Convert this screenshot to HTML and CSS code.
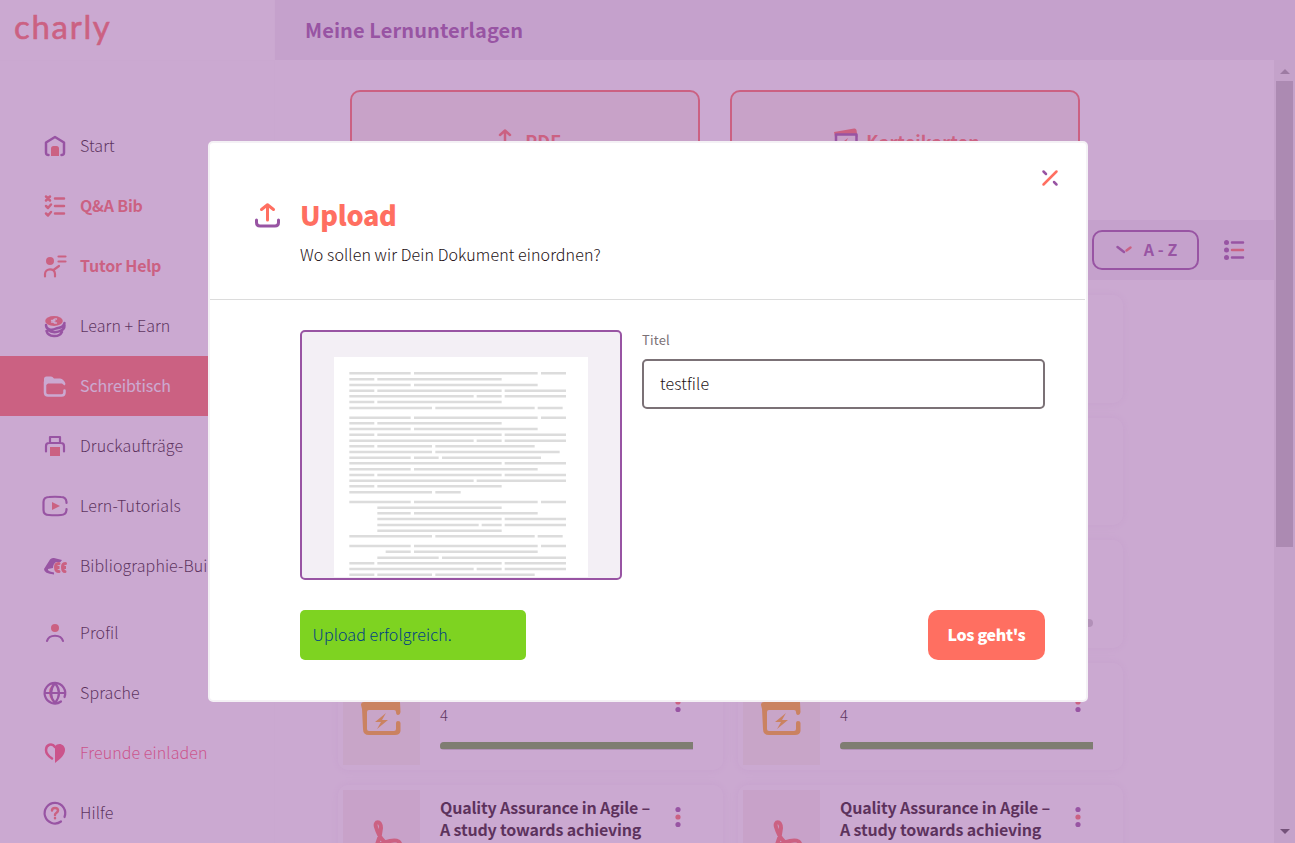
FILE: index.html
```html
<!DOCTYPE html>
<html lang="de">
<head>
<meta charset="utf-8">
<title>charly – Meine Lernunterlagen</title>
<link rel="stylesheet" href="styles.css">
</head>
<body>
<div class="app">
  <aside class="sidebar">
    <div class="brand"><span class="logo">charly</span></div>
    <nav class="nav">
      <a class="item"><svg class="ico" viewBox="0 0 30 30"><path class="p" d="M8.500 24C6.500 24 6 23.500 6 21.500V11.500L15 6L24 11.500V21.500C24 23.500 23.500 24 21.500 24"/><path class="cf" d="M11 25V17.500Q11 15 13.500 15H16.500Q19 15 19 17.500V25Z"/></svg>Start</a>
      <a class="item strong"><svg class="ico" viewBox="0 0 30 30"><path class="c" d="M15 7.500H24M15 15H24M15 22.500H24M6 5.500L10 9.500M10 5.500L6 9.500M6 15L8 17L11 13.500M6 22.500L8 24.500L11 21"/></svg>Q&amp;A Bib</a>
      <a class="item strong"><svg class="ico" viewBox="0 0 30 30"><circle class="cf" cx="10" cy="10" r="4"/><path class="c thin" d="M5 25.500V23C5 17 15 16.500 15 23V25.500M13.500 19L19 15M18.500 5.500H25.500M18.500 10.500H25.500"/></svg>Tutor Help</a>
      <a class="item"><svg class="ico" viewBox="0 0 30 30"><path class="p" d="M6 14C6 19 12 19.500 16 17.500C20 17 24 15.500 24.500 12M6.500 20C8 26 19 27 22 21M24.500 14C25 21 13 23 8 19"/><ellipse class="cf" cx="14" cy="10" rx="8.800" ry="5"/><path class="w" d="M16.500 8C12.500 7 12 13 16.500 12M11.500 9.300H15M11.500 11H15"/></svg>Learn + Earn</a>
      <a class="item active"><svg class="ico" viewBox="0 0 30 30"><path class="wf" d="M4 8Q4 5.500 6.500 5.500H11Q12.500 5.500 14 7.500H20Q24 8 25.500 13L24.500 14.500L22 12.500H8L6 14V21H4Z"/><path class="w2" d="M5 11V21.500Q5 24.500 8 24.500H21.500Q24.500 24.500 24.500 21.500V19.500"/></svg>Schreibtisch</a>
      <a class="item"><svg class="ico" viewBox="0 0 30 30"><path class="p thin" d="M10 11V6H20V11M6 20.500V15Q6 12 9 12H21Q24 12 24 15V20.500"/><path class="cf" d="M10 16H20V25H10Z"/></svg>Druckaufträge</a>
      <a class="item"><svg class="ico" viewBox="0 0 30 30"><path class="p thin" d="M26.500 12V11Q26 6 21 6Q15 5.500 9 6Q3.500 6 3.500 11V19Q3.500 24 9 24Q15 24.500 21 24Q26 24 26.500 19V18"/><path class="cf" d="M12 11L20 15L12 19Z"/></svg>Lern-Tutorials</a>
      <a class="item"><svg class="ico" viewBox="0 0 30 30"><path class="pf" d="M4 18L10 8.500Q11.500 6.500 14 7L22 9L20.500 11L16 11Q13 13 13 17L8 18Q7 20 14 21.500V23.500Q4 22.500 4 18Z"/><path class="c3" d="M19 12.500Q15.500 12.500 15.500 16Q15.500 20.500 19 20.500M25.500 12.500Q22.500 12.500 22.500 16Q22.500 20.500 25 20.500"/><path class="cf" d="M15 15H19.500V18H15ZM22 15H26V18H22Z"/></svg>Bibliographie-Builder</a>
    </nav>
    <nav class="nav lower">
      <a class="item"><svg class="ico" viewBox="0 0 30 30"><circle class="cf" cx="15" cy="10" r="4"/><path class="p thin" d="M7 23C9 16 21 16 23 23"/></svg>Profil</a>
      <a class="item"><svg class="ico" viewBox="0 0 30 30"><path class="cf" d="M12 7Q6 14 12 23L15 25Q8 15 15 5Z"/><path class="p thin" d="M24.500 19A10.300 10.300 0 1 0 21 23.500M5 15H25M15 5Q7 15 15 25M15 5Q23 15 15 25"/></svg>Sprache</a>
      <a class="item pink"><svg class="ico" viewBox="0 0 30 30"><path class="kf" d="M15 25V8.500C18 4 25 6 25 12C25 17 20 21 15 25Z"/><path class="k" d="M15 9C12 4.500 6 6.500 6 12C6 16 9 18.500 12 20.500"/></svg>Freunde einladen</a>
      <a class="item"><svg class="ico" viewBox="0 0 30 30"><path class="p thin" d="M24.500 19A10.300 10.300 0 1 0 21 23.500"/><path class="c" d="M12 12.500C12 9 18 9 18 12.500C18 15 15 14.500 15 17M15 20V20.200"/></svg>Hilfe</a>
    </nav>
  </aside>
  <div class="page">
    <header class="topbar"><h1>Meine Lernunterlagen</h1></header>
    <div class="body">
      <main class="content">
        <div class="tiles">
          <div class="tile"><svg class="tico" viewBox="0 0 24 24"><path class="c" d="M12 18V3M7 7L12 2.500L17 7M1 17V22H23V17"/></svg>PDF</div>
          <div class="tile"><svg class="tico" viewBox="0 0 24 24"><path class="cf" d="M0 4L20 0.500Q22 0 22.500 2L23.500 9H1Z"/><path class="pbox" d="M2 6.500H22.500V22H2Z"/><path class="cf" d="M14 10L8 14.500H12L10 19L16 14H12Z"/></svg>Karteikarten</div>
        </div>
        <div class="filter">
          <button class="sort"><svg viewBox="0 0 16 8"><path class="p" d="M1.500 1L8 6"/><path class="c" d="M10.500 4.500L14.500 1.500"/></svg>A - Z</button>
          <svg class="listico" viewBox="0 0 22 22"><path class="p" d="M9 3.500H20M9 18.500H20"/><path class="c" d="M9 11H20"/><circle class="pf" cx="3.500" cy="3.500" r="2.500"/><circle class="pf" cx="3.500" cy="11" r="2.500"/><circle class="pf" cx="3.500" cy="18.500" r="2.500"/></svg>
        </div>
        <div class="cards">
          <div class="card"></div><div class="card"></div>
          <div class="card"></div><div class="card"></div>
          <div class="card"></div><div class="card"><div class="thumb"></div><div class="info"><div class="track"></div></div></div>
          <div class="card short"><div class="thumb yellow"><svg class="big" viewBox="0 0 40 40"><path class="of" d="M1 10L0 6Q0 3 3 3L36 0Q39 0 39 3L39.500 13Q39 16 37 16Q35 16 35 13Q35 11 33 11H8Q6 11 6 13V30Q6 32 8 32H33Q35 32 35 30V24Q35 22 37 22Q39.500 22 39.500 24V32Q39 36 34 36H8Q2 36 2 30Z"/><path class="of" d="M25 14L14 23H20L16 30L27 21H21Z"/></svg></div><div class="info"><span class="count">4</span><div class="track full"><div class="fill"></div></div></div><svg class="dots" viewBox="0 0 6 22"><circle class="pf" cx="3" cy="3.500" r="2.600"/><circle class="cf" cx="3" cy="11" r="2.600"/><circle class="pf" cx="3" cy="18.500" r="2.600"/></svg></div>
          <div class="card short"><div class="thumb yellow"><svg class="big" viewBox="0 0 40 40"><path class="of" d="M1 10L0 6Q0 3 3 3L36 0Q39 0 39 3L39.500 13Q39 16 37 16Q35 16 35 13Q35 11 33 11H8Q6 11 6 13V30Q6 32 8 32H33Q35 32 35 30V24Q35 22 37 22Q39.500 22 39.500 24V32Q39 36 34 36H8Q2 36 2 30Z"/><path class="of" d="M25 14L14 23H20L16 30L27 21H21Z"/></svg></div><div class="info"><span class="count">4</span><div class="track full"><div class="fill"></div></div></div><svg class="dots" viewBox="0 0 6 22"><circle class="pf" cx="3" cy="3.500" r="2.600"/><circle class="cf" cx="3" cy="11" r="2.600"/><circle class="pf" cx="3" cy="18.500" r="2.600"/></svg></div>
          <div class="card"><div class="thumb"><svg class="big" viewBox="0 0 40 40"><path class="pdf" d="M7 38C14 30 18 20 19 9C19 1 12 2 14 8C16 15 20 25 31 27C42 28 39 19 28 22C20 24 10 27 4 33"/></svg></div><div class="info"><h3>Quality Assurance in Agile – A study towards achieving</h3></div><svg class="dots" viewBox="0 0 6 22"><circle class="pf" cx="3" cy="3.500" r="2.600"/><circle class="cf" cx="3" cy="11" r="2.600"/><circle class="pf" cx="3" cy="18.500" r="2.600"/></svg></div>
          <div class="card"><div class="thumb"><svg class="big" viewBox="0 0 40 40"><path class="pdf" d="M7 38C14 30 18 20 19 9C19 1 12 2 14 8C16 15 20 25 31 27C42 28 39 19 28 22C20 24 10 27 4 33"/></svg></div><div class="info"><h3>Quality Assurance in Agile – A study towards achieving</h3></div><svg class="dots" viewBox="0 0 6 22"><circle class="pf" cx="3" cy="3.500" r="2.600"/><circle class="cf" cx="3" cy="11" r="2.600"/><circle class="pf" cx="3" cy="18.500" r="2.600"/></svg></div>
        </div>
      </main>
      <div class="scroll"><i class="up"></i><div class="grip"></div><i class="down"></i></div>
    </div>
  </div>
</div>

<div class="overlay">
  <section class="modal">
    <div class="head">
      <svg class="close" viewBox="0 0 16 16"><path class="c" d="M1.500 14.500L14.500 1.500"/><path class="p" d="M1.500 1.500L4 4M12 12L14.500 14.500"/></svg>
      <div class="title"><svg class="upico" viewBox="0 0 25 25"><path class="c3" d="M12.500 17V2M6.500 6.500L12.500 1.800L18.500 6.500"/><path class="p3" d="M1.500 17V19.500Q1.500 23 5 23H20Q23.500 23 23.500 19.500V17"/></svg><h2>Upload</h2></div>
      <p>Wo sollen wir Dein Dokument einordnen?</p>
    </div>
    <div class="form">
      <div class="preview">
        <svg class="paper" viewBox="132 111 762 660"><path class="ln" d="M178 160H362M372 160H743M753 160H828
M178 178H253M262 178H635
M178 195H362M372 195H743
M178 212H253M262 212H635M644 212H828
M178 229H551M560 229H635M644 229H828
M178 246H253M262 246H635
M178 264H426M436 264H734M743 264H818
M178 293H362M372 293H743M753 293H828
M178 310H253M262 310H635
M178 327H362M372 327H743
M178 344H253M262 344H635M644 344H828
M178 362H551M560 362H635M644 362H828
M178 379H253M262 379H426M436 379H734
M178 396H426M436 396H809
M178 413H362M372 413H446M456 413H753
M178 430H635M644 430H828
M178 448H362M372 448H743
M178 465H253M262 465H635M644 465H828
M178 482H551M560 482H828
M178 499H253M262 499H635
M178 517H426M436 517H512
M178 546H362M372 546H743M753 546H828
M262 563H635
M262 580H362M372 580H743
M262 597H635M644 597H828
M262 615H566M575 615H635M644 615H828
M262 632H635
M178 649H426M436 649H734M743 649H818
M178 678H362M372 678H743M753 678H828
M287 695H362M372 695H743
M262 713H446M456 713H828
M178 730H253M262 730H635M644 730H828
M178 747H551M560 747H635M644 747H828
M178 764H253M262 764H426M436 764H734"/></svg>
      </div>
      <div class="field"><label>Titel</label><input type="text" value="testfile"></div>
    </div>
    <div class="foot"><div class="success">Upload erfolgreich.</div><button class="go">Los geht's</button></div>
  </section>
</div>
</body>
</html>
```
FILE: styles.css
```css
:root { --coral: #ff6f61; --purple: #9854a3; --ink: #231014; --soft: #f3eff5; }
* { box-sizing: border-box; }
html, body { margin: 0; height: 100%; overflow: hidden; }
body { font-family: "Noto Sans CJK SC", "Open Sans", sans-serif; font-weight: 300; font-size: 16px; line-height: 22px; letter-spacing: 0.1px; color: var(--ink); background: #fff; }
h1, h2, h3, p { margin: 0; }
svg { display: block; flex: none; overflow: visible; }
svg path { fill: none; stroke-width: 2.500; stroke-linecap: round; stroke-linejoin: round; }
svg .p { stroke: var(--purple); }
svg .c { stroke: var(--coral); }
svg .c3 { stroke: var(--coral); stroke-width: 3; }
svg .p3 { stroke: var(--purple); stroke-width: 3; }
svg .thin { stroke-width: 2.200; }
svg .pf { fill: var(--purple); }
svg .cf { fill: var(--coral); }
svg .of { fill: #fdb01f; }
svg .w { stroke: #fff; stroke-width: 1.3; }
svg .w2 { stroke: #fff; }
svg .wf { fill: #fff; }
svg .k { stroke: #ff5573; }
svg .kf { fill: #ff5573; }
svg .pbox { fill: #f9f1ee; stroke: var(--purple); }

.app { display: flex; height: 843px; }
.sidebar { width: 275px; flex: none; border-right: 1px solid #fdfcfd; }
.brand { height: 61px; border-bottom: 1px solid #fdfcfd; padding: 6px 0 0 14px; }
.logo { display: inline-block; font-family: Lato, sans-serif; font-weight: 400; font-size: 33px; line-height: 40px; letter-spacing: 1.7px; color: var(--coral); -webkit-text-stroke: 0.6px var(--coral); }
.nav { padding-top: 55px; }
.nav.lower { padding-top: 7px; }
.item { display: flex; align-items: center; height: 60px; padding: 0 0 2px 40px; gap: 10px; white-space: nowrap; }
.item.strong { color: var(--coral); font-weight: 700; letter-spacing: -0.2px; }
.item.active { color: #fff; background: var(--coral); font-weight: 400; letter-spacing: -0.1px; }
.item.pink { color: #ff5573; }
.ico { width: 30px; height: 30px; margin-top: 2px; }

.page { flex: 1; display: flex; flex-direction: column; min-width: 0; }
.topbar { height: 60px; flex: none; background: var(--soft); display: flex; align-items: center; padding-left: 30px; }
.topbar h1 { font-size: 20px; line-height: 28px; font-weight: 700; letter-spacing: 0.1px; color: var(--purple); }
.body { display: flex; flex: 1; min-height: 0; }
.content { flex: 1; overflow: hidden; padding-top: 30px; }
.tiles { display: flex; gap: 30px; padding-left: 75px; margin-bottom: 30px; }
.tile { width: 350px; height: 100px; border: 2px solid var(--coral); border-radius: 10px; background: #f9f1ec; display: flex; align-items: center; justify-content: center; gap: 8px; padding: 2px 0 0 4px; font-size: 18px; font-weight: 700; color: var(--coral); }
.tico { width: 24px; height: 24px; margin-top: -2px; }
.filter { height: 60px; background: var(--soft); display: flex; align-items: center; justify-content: flex-end; gap: 24px; padding-right: 29px; }
.sort { font: inherit; font-weight: 700; letter-spacing: 0.1px; color: var(--purple); background: none; border: 2px solid var(--purple); border-radius: 10px; width: 107px; height: 40px; padding: 0 0 2px 2px; display: flex; align-items: center; justify-content: center; gap: 12px; }
.sort svg { width: 16px; height: 8px; margin-top: 2px; }
.listico { width: 22px; height: 22px; }
.cards { display: grid; grid-template-columns: 385px 385px; grid-auto-rows: 107.500px; gap: 15px; padding: 15px 0 0 63px; }
.card { border-radius: 10px; background: #fff; box-shadow: 0 0 10px rgba(152, 84, 163, 0.1); display: flex; padding: 5px; }
.thumb { width: 77px; background: #f9f0ee; display: flex; align-items: center; justify-content: center; }
.thumb.yellow { background: #f9f6ec; padding: 6px 2px 0 0; }
.big { width: 40px; height: 40px; }
.big .pdf { stroke: var(--coral); stroke-width: 4; }
.info { width: 253px; margin-left: 20px; }
.info h3 { font-size: 16px; line-height: 22px; font-weight: 700; letter-spacing: -0.18px; width: 217px; padding-top: 6px; }
.count { display: block; font-size: 15px; padding: 36px 0 16px; height: 74px; }
.track { height: 8px; border-radius: 4px; background: #cdcdcd; overflow: hidden; }
.track.full { border-radius: 4px 0 0 4px; }
.card > .info > .track:first-child { margin-top: 74px; }
.fill { height: 7px; background: #66a641; }
.dots { width: 6px; height: 22px; margin: 16px 0 0 -18px; }
.short .dots { margin-top: 23px; }
.scroll { width: 21px; background: #f1f1f1; padding: 0 2px; display: flex; flex-direction: column; align-items: center; }
.grip { width: 17px; height: 466px; background: #c1c1c1; }
.up, .down { width: 0; height: 0; border: 5px solid transparent; border-top-width: 0; }
.up { border-bottom: 5px solid #a3a3a3; margin: 9px 0 7px; }
.down { border-top: 5px solid #505050; border-bottom-width: 0; margin-top: auto; margin-bottom: 9px; }

.overlay { position: fixed; inset: 0; background: rgba(152, 84, 163, 0.5); display: flex; align-items: center; justify-content: center; padding-left: 1px; }
.modal { width: 880px; height: 561px; background: #fff; border: 2px solid #f4f1f5; border-radius: 5px; }
.head { height: 157px; border-bottom: 1px solid #dcdcdc; padding: 27px 27px 0 44px; margin: 0 1px 0 0; }
.close { width: 16px; height: 16px; margin-left: auto; }
.title { display: flex; align-items: center; gap: 20px; height: 40px; margin-top: 9px; padding-left: 1px; }
.upico { width: 25px; height: 25px; }
h2 { font-size: 27px; line-height: 40px; font-weight: 900; letter-spacing: -0.3px; color: var(--coral); }
.head p { padding: 8px 0 0 46px; }
.form { display: flex; gap: 20px; padding: 30px 41px 0 90px; }
.preview { width: 322px; height: 250px; border: 2px solid var(--purple); border-radius: 5px; background: var(--soft); padding: 25px 0 0 32px; overflow: hidden; }
.paper { width: 254px; height: 220px; background: #fff; overflow: hidden; }
.paper .ln { stroke: #dcdcdc; stroke-width: 7.500; stroke-linecap: butt; }
.field { flex: 1; }
.field label { display: block; font-size: 13px; line-height: 20px; height: 29px; color: #7b7176; font-weight: 400; letter-spacing: 0.2px; }
.field input { display: block; width: 100%; height: 50px; border: 2px solid #7b7176; border-radius: 5px; padding: 0 16px 2px; font: inherit; letter-spacing: inherit; color: var(--ink); outline: none; }
.foot { display: flex; justify-content: space-between; padding: 30px 41px 0 90px; }
.success { width: 226px; height: 50px; border-radius: 5px; background: #7ed321; color: #004085; line-height: 48px; padding-left: 12.500px; }
.go { width: 117px; height: 50px; border: 0; border-radius: 10px; background: var(--coral); color: #fff; font: inherit; font-weight: 900; letter-spacing: -0.35px; padding: 0 0 2px; }
```
